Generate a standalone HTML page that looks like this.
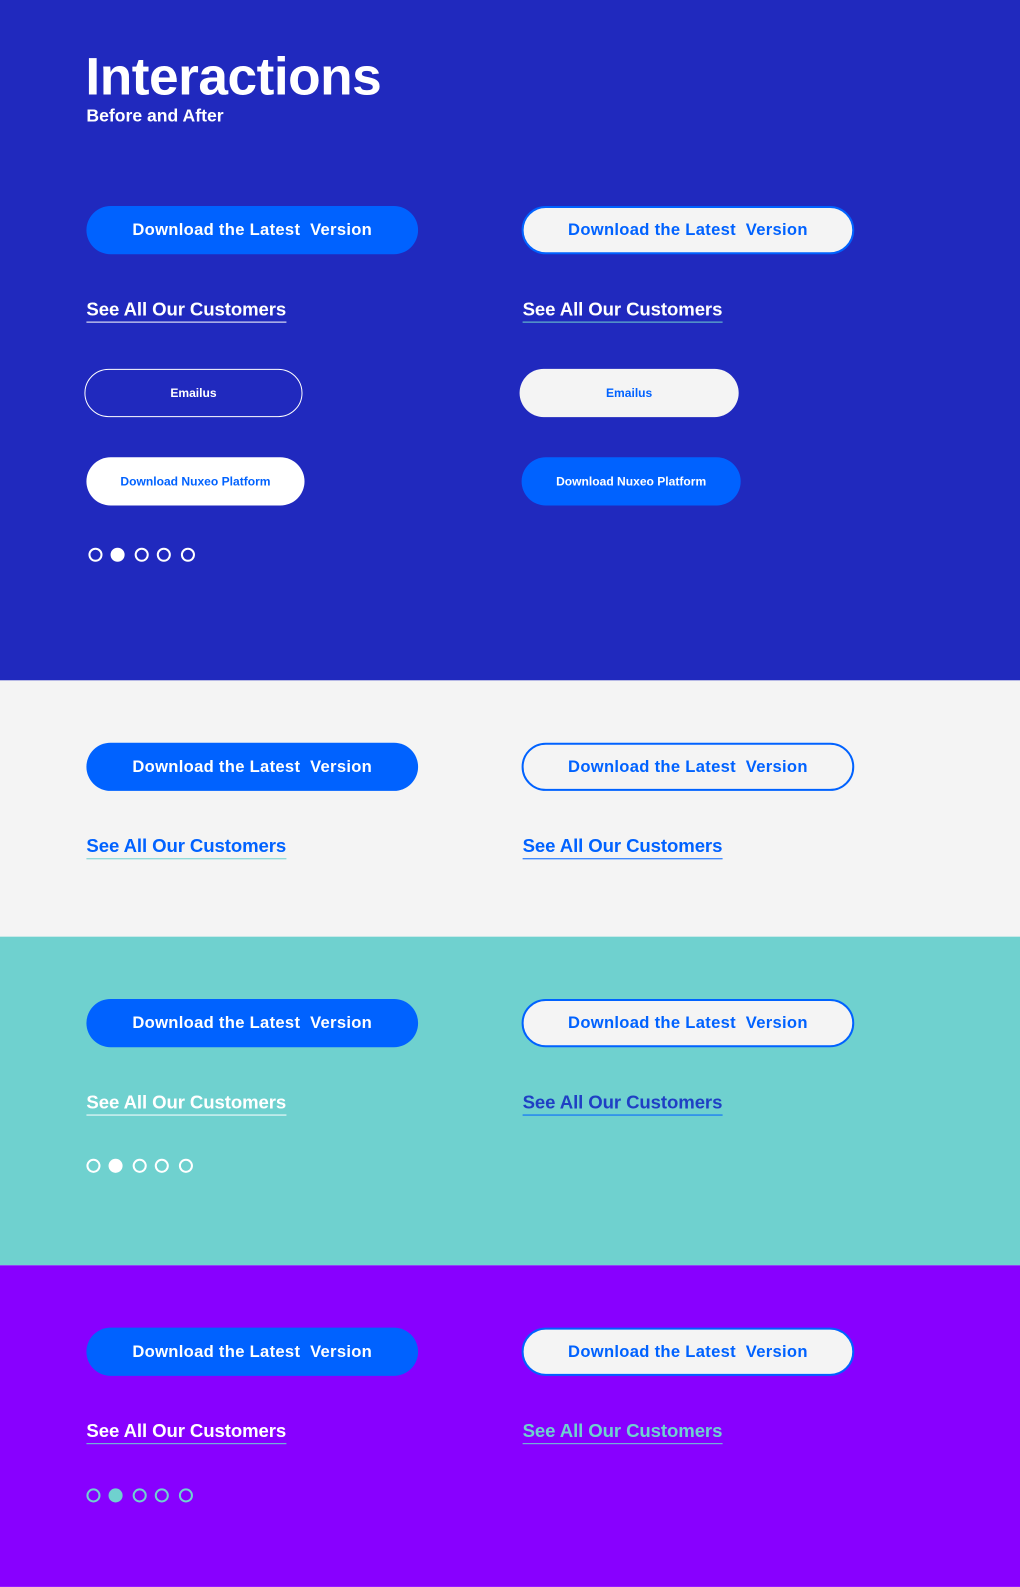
<!DOCTYPE html>
<html><head><meta charset="utf-8"><style>
*{margin:0;padding:0;box-sizing:border-box}
body{width:1020px;height:1576px;position:relative;font-family:"Liberation Sans",sans-serif;font-weight:bold;overflow:hidden}
#w{position:absolute;left:0;top:0;width:1015px;height:1570px;transform:scale(1.005);transform-origin:0 0}
.sec{position:absolute;left:0;width:1020px}
.a{position:absolute}
.btn{position:absolute;border-radius:24px;display:flex;align-items:center;justify-content:center;font-size:16.5px;white-space:pre;letter-spacing:0.3px}
.fill{background:#0062FF;color:#fff}
.out{background:#F4F4F4;color:#0062FF;border:2px solid #0062FF}
.sm{font-size:12px;letter-spacing:0}
.lnk{position:absolute;font-size:18.5px;line-height:22px;padding-bottom:1px;border-bottom:1.5px solid #fff;letter-spacing:-0.1px}
.dot{position:absolute;width:14px;height:14px;border-radius:50%;border:2px solid #fff}
</style></head><body><div id="w">
<div class="sec" style="top:0;height:677px;background:#2029BE"></div>
<div class="sec" style="top:677px;height:255px;background:#F4F4F4"></div>
<div class="sec" style="top:932px;height:327px;background:#6FD1CF"></div>
<div class="sec" style="top:1259px;height:320px;background:#8800FF"></div>

<div class="a" style="left:85px;top:46px;font-size:53px;color:#fff;letter-spacing:-0.5px;line-height:62px">Interactions</div>
<div class="a" style="left:86px;top:104px;font-size:17.5px;color:#fff;line-height:22px">Before and After</div>

<div class="btn fill" style="left:86px;top:205px;width:330px;height:48px">Download the Latest  Version</div>
<div class="btn out" style="left:519px;top:205px;width:331px;height:48px">Download the Latest  Version</div>
<div class="lnk" style="left:86px;top:297px;color:#fff;border-color:#fff">See All Our Customers</div>
<div class="lnk" style="left:520px;top:297px;color:#fff;border-color:#6FD1CF">See All Our Customers</div>
<div class="btn sm" style="left:84px;top:367px;width:217px;height:48px;border:1.5px solid #fff;color:#fff">Emailus</div>
<div class="btn sm" style="left:517px;top:367px;width:218px;height:48px;background:#F4F4F4;color:#0062FF">Emailus</div>
<div class="btn sm" style="left:86px;top:455px;width:217px;height:48px;background:#fff;color:#0062FF">Download Nuxeo Platform</div>
<div class="btn sm fill" style="left:519px;top:455px;width:218px;height:48px">Download Nuxeo Platform</div>
<div class="dot" style="left:88px;top:545px"></div>
<div class="dot" style="left:110px;top:545px;background:#fff"></div>
<div class="dot" style="left:134px;top:545px"></div>
<div class="dot" style="left:156px;top:545px"></div>
<div class="dot" style="left:180px;top:545px"></div>

<div class="btn fill" style="left:86px;top:739px;width:330px;height:48px">Download the Latest  Version</div>
<div class="btn out" style="left:519px;top:739px;width:331px;height:48px">Download the Latest  Version</div>
<div class="lnk" style="left:86px;top:831px;color:#0062FF;border-color:#6FD1CF">See All Our Customers</div>
<div class="lnk" style="left:520px;top:831px;color:#0062FF;border-color:#0062FF">See All Our Customers</div>

<div class="btn fill" style="left:86px;top:994px;width:330px;height:48px">Download the Latest  Version</div>
<div class="btn out" style="left:519px;top:994px;width:331px;height:48px">Download the Latest  Version</div>
<div class="lnk" style="left:86px;top:1086px;color:#fff;border-color:#fff">See All Our Customers</div>
<div class="lnk" style="left:520px;top:1086px;color:#1F3FC4;border-color:#0062FF">See All Our Customers</div>
<div class="dot" style="left:86px;top:1153px"></div>
<div class="dot" style="left:108px;top:1153px;background:#fff"></div>
<div class="dot" style="left:132px;top:1153px"></div>
<div class="dot" style="left:154px;top:1153px"></div>
<div class="dot" style="left:178px;top:1153px"></div>

<div class="btn fill" style="left:86px;top:1321px;width:330px;height:48px">Download the Latest  Version</div>
<div class="btn out" style="left:519px;top:1321px;width:331px;height:48px">Download the Latest  Version</div>
<div class="lnk" style="left:86px;top:1413px;color:#fff;border-color:#6FD1CF">See All Our Customers</div>
<div class="lnk" style="left:520px;top:1413px;color:#6FD1CF;border-color:#6FD1CF">See All Our Customers</div>
<div class="dot" style="left:86px;top:1481px;border-color:#6FD1CF"></div>
<div class="dot" style="left:108px;top:1481px;border-color:#6FD1CF;background:#6FD1CF"></div>
<div class="dot" style="left:132px;top:1481px;border-color:#6FD1CF"></div>
<div class="dot" style="left:154px;top:1481px;border-color:#6FD1CF"></div>
<div class="dot" style="left:178px;top:1481px;border-color:#6FD1CF"></div>
</div></body></html>
